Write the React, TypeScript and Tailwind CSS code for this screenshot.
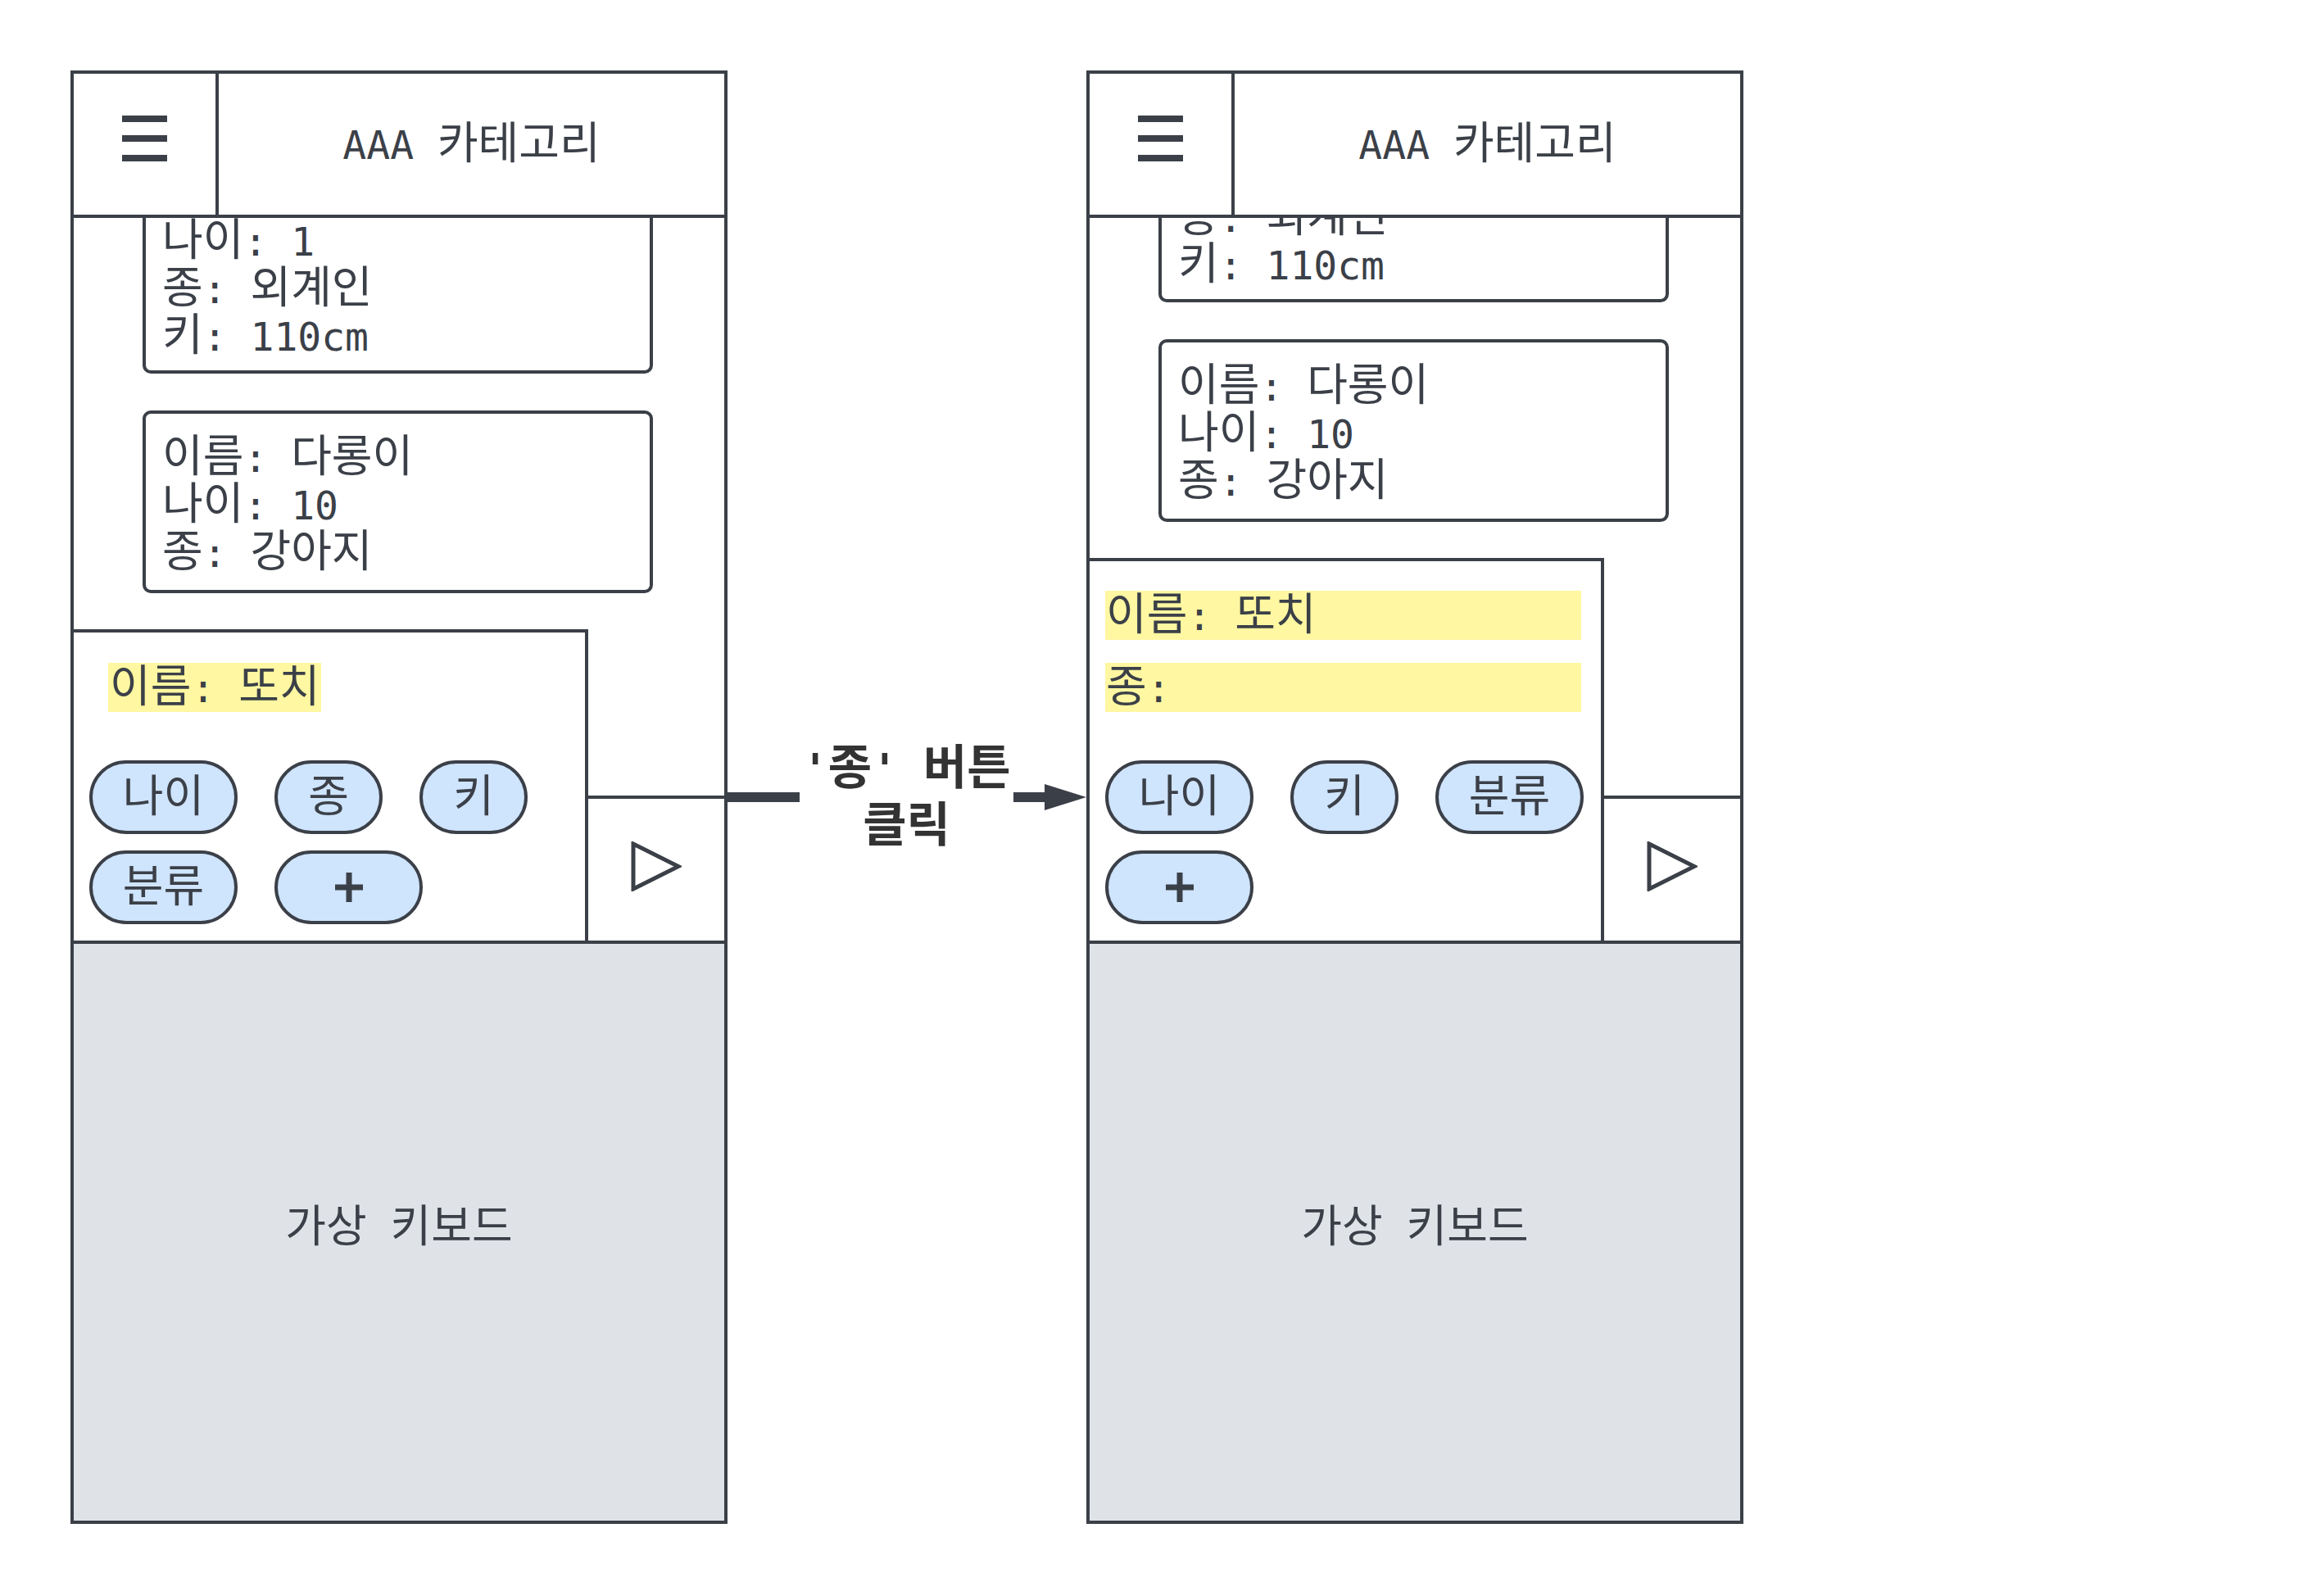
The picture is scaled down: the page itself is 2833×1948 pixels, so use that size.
import React from "react";

// Hangul runs get a larger size so they sit like the mono CJK face in the mockup
function T({ s, bold }: { s: string; bold?: boolean }) {
  const parts = s.split(/([\uAC00-\uD7A3]+)/);
  return (
    <span>
      {parts.map((p, i) =>
        /[\uAC00-\uD7A3]/.test(p) ? (
          <span key={i} className={bold ? "text-[58px]" : "text-[54px]"}>
            {p}
          </span>
        ) : (
          <React.Fragment key={i}>{p}</React.Fragment>
        )
      )}
    </span>
  );
}

type CardProps = { lines: string[]; tight?: boolean };

function Card({ lines, tight }: CardProps) {
  return (
    <div
      className={`shrink-0 w-[623px] border-4 border-[#3b4048] rounded-[10px] pl-[20px] pt-[24px] ${tight ? "pb-[13px]" : "pb-[17px]"} text-[48px] leading-[58px] whitespace-pre`}
    >
      {lines.map((l) => (
        <div key={l} className="h-[58px]">
          <T s={l} />
        </div>
      ))}
    </div>
  );
}

function Chip({ children, wide }: { children: React.ReactNode; wide?: boolean }) {
  return (
    <div
      className={`${wide ? "w-[181px]" : "w-[132px]"} h-[90px] rounded-full border-4 border-[#3b4048] bg-[#cfe4fd] flex items-center justify-center text-[48px] leading-[58px]`}
    >
      {children}
    </div>
  );
}

function Plus() {
  return (
    <svg width="34" height="36" viewBox="0 0 34 36">
      <path d="M17 0v36M0 18h34" stroke="#3b4048" strokeWidth="7" fill="none" />
    </svg>
  );
}

function Phone({ after }: { after?: boolean }) {
  return (
    <div className="shrink-0 w-[802px] h-[1774px] border-4 border-[#3b4048] flex flex-col bg-white">
      {/* header */}
      <div className="shrink-0 h-[176px] border-b-4 border-[#3b4048] flex">
        <div className="w-[177px] border-r-4 border-[#3b4048] flex flex-col items-center justify-center gap-[16px] pb-[14px]">
          <span className="w-[55px] h-[8px] bg-[#3b4048]" />
          <span className="w-[55px] h-[8px] bg-[#3b4048]" />
          <span className="w-[55px] h-[8px] bg-[#3b4048]" />
        </div>
        <div className="flex-1 flex items-center justify-center text-[48px] leading-[58px] whitespace-pre">
          <T s="AAA 카테고리" />
        </div>
      </div>

      {/* body */}
      <div className="shrink-0 h-[882px] flex flex-col">
        <div className="flex-1 min-h-0 overflow-hidden flex flex-col justify-end gap-[45px] pb-[44px] pl-[84px]">
          <Card lines={["나이: 1", "종: 외계인", "키: 110cm"]} tight />
          <Card lines={["이름: 다롱이", "나이: 10", "종: 강아지"]} />
        </div>

        <div className="flex items-end">
          <div className="w-[628px] border-t-4 border-r-4 border-[#3b4048] flex flex-col">
            {after ? (
              <div className="pt-[36px] flex flex-col gap-[28px]">
                <div className="ml-[19px] mr-[24px] h-[60px] bg-[#fff7a1] pl-[1px] text-[48px] leading-[60px] whitespace-pre">
                  <T s="이름: 또치" />
                </div>
                <div className="ml-[19px] mr-[24px] h-[60px] bg-[#fff7a1] pl-[1px] text-[48px] leading-[60px] whitespace-pre">
                  <T s="종:" />
                </div>
              </div>
            ) : (
              <div className="pt-[37px] h-[97px]">
                <span className="inline-block ml-[42px] h-[60px] pl-[2px] pr-[1px] bg-[#fff7a1] text-[48px] leading-[60px] whitespace-pre">
                  <T s="이름: 또치" />
                </span>
              </div>
            )}
            <div className="mt-[59px] pb-[20px] pl-[19px] flex flex-wrap gap-x-[45px] gap-y-[20px]">
              {after ? (
                <>
                  <Chip wide><T s="나이" /></Chip>
                  <Chip><T s="키" /></Chip>
                  <Chip wide><T s="분류" /></Chip>
                  <Chip wide>
                    <Plus />
                  </Chip>
                </>
              ) : (
                <>
                  <Chip wide><T s="나이" /></Chip>
                  <Chip><T s="종" /></Chip>
                  <Chip><T s="키" /></Chip>
                  <Chip wide><T s="분류" /></Chip>
                  <Chip wide>
                    <Plus />
                  </Chip>
                </>
              )}
            </div>
          </div>
          <div className="flex-1 h-[177px] border-t-4 border-[#3b4048] flex items-center justify-center pb-[8px]">
            <svg width="62" height="61" viewBox="0 0 62 61">
              <polygon points="3,3 3,58 58,30.5" fill="none" stroke="#3b4048" strokeWidth="5" />
            </svg>
          </div>
        </div>
      </div>

      {/* keyboard */}
      <div className="flex-1 border-t-4 border-[#3b4048] bg-[#dfe2e7] flex items-center justify-center pb-[12px] text-[48px] leading-[58px] whitespace-pre">
        <T s="가상 키보드" />
      </div>
    </div>
  );
}

function Connector() {
  return (
    <div className="shrink-0 w-[438px] mt-[819px] h-[136px] flex items-center">
      <div className="w-[88px] h-[12px] bg-[#3b4048]" />
      <div className="w-[261px] flex flex-col items-center text-[52px] leading-[68px] font-bold text-[#333333] whitespace-pre">
        <T s="'종' 버튼" bold />
        <T s="클릭" bold />
      </div>
      <div className="w-[38px] h-[12px] bg-[#3b4048]" />
      <svg width="51" height="32" viewBox="0 0 51 32">
        <polygon points="0,0 51,16 0,32" fill="#3b4048" />
      </svg>
    </div>
  );
}

export default function App() {
  return (
    <div className="w-[2833px] h-[1948px] bg-white flex items-start pt-[86px] pl-[86px] text-[#3b4048] font-['DejaVu_Sans_Mono','Noto_Sans_CJK_KR',monospace]">
      <Phone />
      <Connector />
      <Phone after />
    </div>
  );
}
